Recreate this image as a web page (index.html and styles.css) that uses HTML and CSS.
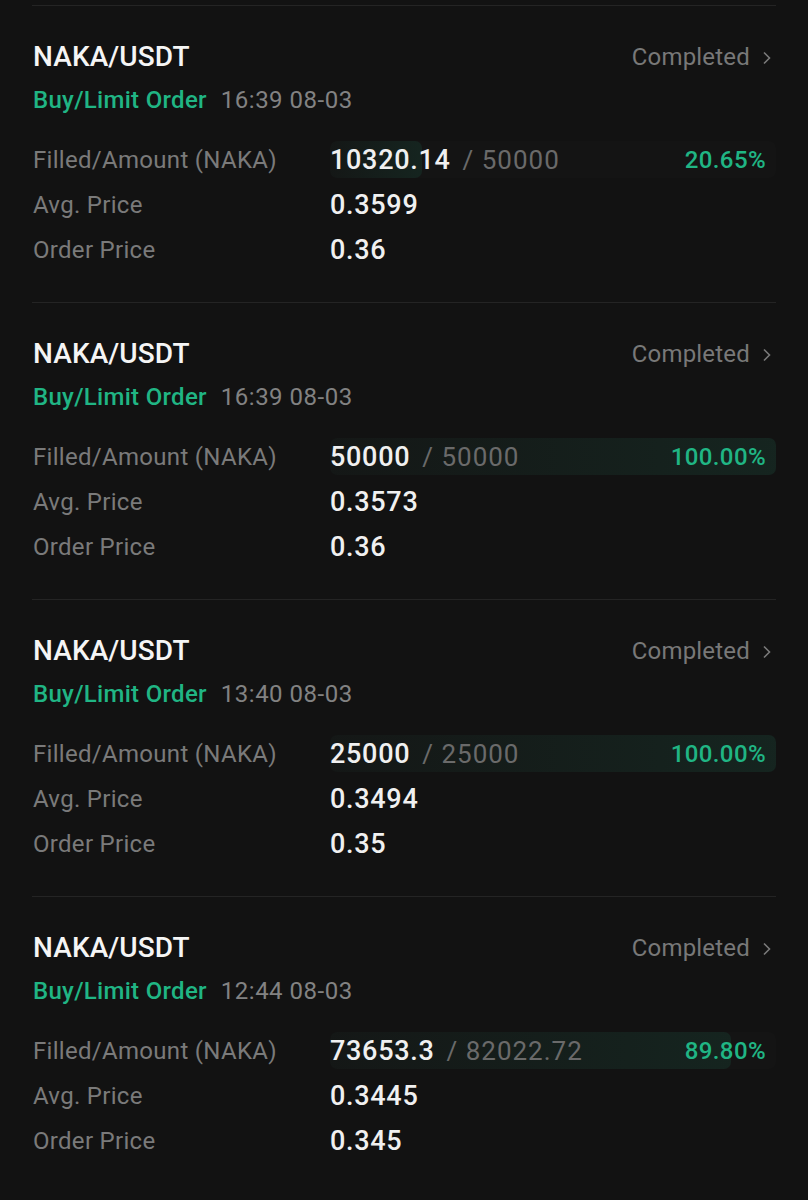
FILE: index.html
```html
<!DOCTYPE html>
<html>
<head>
<meta charset="utf-8">
<link rel="stylesheet" href="styles.css">
</head>
<body>
<div class="list">
  <div class="order">
    <div class="head">
      <div class="pair">NAKA/USDT</div>
      <div class="status">Completed <svg class="chev" width="10" height="16" viewBox="0 0 10 16"><path d="M2 2.5 L7.5 8 L2 13.5" fill="none" stroke="#7a7a7a" stroke-width="1.6"/></svg></div>
    </div>
    <div class="sub"><span class="side">Buy/Limit Order</span><span class="time">16:39 08-03</span></div>
    <div class="rows">
      <div class="row"><span class="label">Filled/Amount (NAKA)</span>
        <div class="bar"><div class="fill" style="width:20.65%"></div><span class="val">10320.14</span><span class="total">/ 50000</span><span class="pct">20.65%</span></div></div>
      <div class="row"><span class="label">Avg. Price</span><span class="val">0.3599</span></div>
      <div class="row"><span class="label">Order Price</span><span class="val">0.36</span></div>
    </div>
  </div>
  <div class="order">
    <div class="head">
      <div class="pair">NAKA/USDT</div>
      <div class="status">Completed <svg class="chev" width="10" height="16" viewBox="0 0 10 16"><path d="M2 2.5 L7.5 8 L2 13.5" fill="none" stroke="#7a7a7a" stroke-width="1.6"/></svg></div>
    </div>
    <div class="sub"><span class="side">Buy/Limit Order</span><span class="time">16:39 08-03</span></div>
    <div class="rows">
      <div class="row"><span class="label">Filled/Amount (NAKA)</span>
        <div class="bar"><div class="fill" style="width:100%"></div><span class="val">50000</span><span class="total">/ 50000</span><span class="pct">100.00%</span></div></div>
      <div class="row"><span class="label">Avg. Price</span><span class="val">0.3573</span></div>
      <div class="row"><span class="label">Order Price</span><span class="val">0.36</span></div>
    </div>
  </div>
  <div class="order">
    <div class="head">
      <div class="pair">NAKA/USDT</div>
      <div class="status">Completed <svg class="chev" width="10" height="16" viewBox="0 0 10 16"><path d="M2 2.5 L7.5 8 L2 13.5" fill="none" stroke="#7a7a7a" stroke-width="1.6"/></svg></div>
    </div>
    <div class="sub"><span class="side">Buy/Limit Order</span><span class="time">13:40 08-03</span></div>
    <div class="rows">
      <div class="row"><span class="label">Filled/Amount (NAKA)</span>
        <div class="bar"><div class="fill" style="width:100%"></div><span class="val">25000</span><span class="total">/ 25000</span><span class="pct">100.00%</span></div></div>
      <div class="row"><span class="label">Avg. Price</span><span class="val">0.3494</span></div>
      <div class="row"><span class="label">Order Price</span><span class="val">0.35</span></div>
    </div>
  </div>
  <div class="order">
    <div class="head">
      <div class="pair">NAKA/USDT</div>
      <div class="status">Completed <svg class="chev" width="10" height="16" viewBox="0 0 10 16"><path d="M2 2.5 L7.5 8 L2 13.5" fill="none" stroke="#7a7a7a" stroke-width="1.6"/></svg></div>
    </div>
    <div class="sub"><span class="side">Buy/Limit Order</span><span class="time">12:44 08-03</span></div>
    <div class="rows">
      <div class="row"><span class="label">Filled/Amount (NAKA)</span>
        <div class="bar"><div class="fill" style="width:89.8%"></div><span class="val">73653.3</span><span class="total">/ 82022.72</span><span class="pct">89.80%</span></div></div>
      <div class="row"><span class="label">Avg. Price</span><span class="val">0.3445</span></div>
      <div class="row"><span class="label">Order Price</span><span class="val">0.345</span></div>
    </div>
  </div>
</div>
</body>
</html>
```
FILE: styles.css
```css
* { box-sizing: border-box; }
html, body { margin: 0; padding: 0; background: #121212; }
body {
  font-family: Roboto, "Liberation Sans", sans-serif;
  color: #f2f2f2;
  height: 1200px;
  overflow: hidden;
}
.list {
  padding: 5px 32px 0;
}
.order {
  border-top: 1px solid #242424;
  padding: 34px 0 30px;
  height: 297px;
}
.head {
  display: flex;
  justify-content: space-between;
  align-items: center;
  height: 34px;
}
.pair {
  font-size: 28px;
  font-weight: 500;
  line-height: 34px;
  color: #f5f5f5;
  padding-left: 1px;
  letter-spacing: 0.1px;
}
.status {
  font-size: 24px;
  line-height: 34px;
  color: #787878;
  display: flex;
  align-items: center;
  letter-spacing: 0.2px;
}
.chev {
  margin-left: 12px;
  margin-right: 4px;
  margin-top: 2px;
}
.sub {
  margin-top: 11px;
  line-height: 30px;
  font-size: 24px;
  padding-left: 1px;
  letter-spacing: 0.3px;
}
.side {
  color: #20b584;
  font-weight: 500;
  margin-right: 14px;
}
.time {
  color: #828282;
  letter-spacing: 0.5px;
}
.rows {
  margin-top: 22px;
}
.row {
  display: flex;
  align-items: center;
  height: 45px;
}
.label {
  width: 298px;
  flex: none;
  font-size: 24px;
  color: #7a7a7a;
  padding-left: 1px;
  letter-spacing: 0.3px;
}
.val {
  font-size: 27px;
  font-weight: 500;
  color: #f0f0f0;
  letter-spacing: 0.7px;
}
.total {
  font-size: 26px;
  color: #6a6a6a;
  margin-left: 12px;
  letter-spacing: 1px;
}
.bar {
  position: relative;
  flex: 1;
  height: 37px;
  display: flex;
  align-items: center;
  border-radius: 7px;
  background: rgba(255, 255, 255, 0.012);
}
.bar .val, .bar .total, .bar .pct { position: relative; }
.fill {
  position: absolute;
  left: 0;
  top: 0;
  bottom: 0;
  border-radius: 7px;
  background: linear-gradient(to right, rgba(32, 181, 132, 0.02), rgba(32, 181, 132, 0.1));
}
.pct {
  margin-left: auto;
  margin-right: 10px;
  font-size: 24px;
  font-weight: 500;
  color: #20b584;
  letter-spacing: 0.4px;
}
```
